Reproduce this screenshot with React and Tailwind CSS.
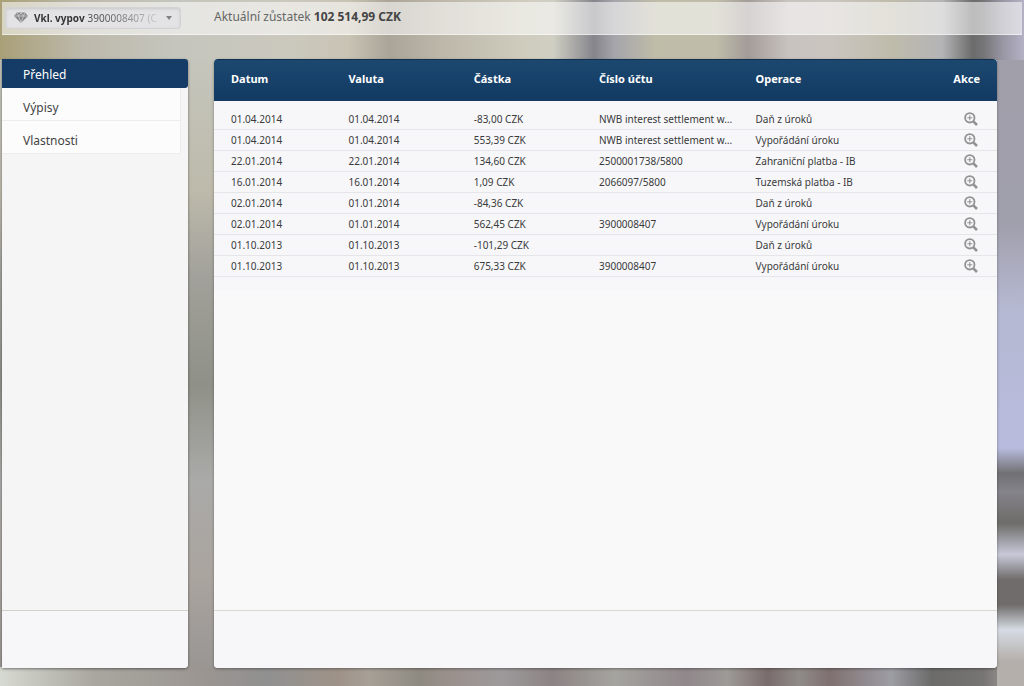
import { useState } from 'react';

const ACCOUNTS = [{ name: 'Vkl. vypov', number: '3900008407 (C' }];

const MENU = ['Přehled', 'Výpisy', 'Vlastnosti'];

const TRANSACTIONS = [
  { date: '01.04.2014', valuta: '01.04.2014', amount: '-83,00 CZK', account: 'NWB interest settlement w…', operation: 'Daň z úroků' },
  { date: '01.04.2014', valuta: '01.04.2014', amount: '553,39 CZK', account: 'NWB interest settlement w…', operation: 'Vypořádání úroku' },
  { date: '22.01.2014', valuta: '22.01.2014', amount: '134,60 CZK', account: '2500001738/5800', operation: 'Zahraniční platba - IB' },
  { date: '16.01.2014', valuta: '16.01.2014', amount: '1,09 CZK', account: '2066097/5800', operation: 'Tuzemská platba - IB' },
  { date: '02.01.2014', valuta: '01.01.2014', amount: '-84,36 CZK', account: '', operation: 'Daň z úroků' },
  { date: '02.01.2014', valuta: '01.01.2014', amount: '562,45 CZK', account: '3900008407', operation: 'Vypořádání úroku' },
  { date: '01.10.2013', valuta: '01.10.2013', amount: '-101,29 CZK', account: '', operation: 'Daň z úroků' },
  { date: '01.10.2013', valuta: '01.10.2013', amount: '675,33 CZK', account: '3900008407', operation: 'Vypořádání úroku' },
];

function GemIcon() {
  return (
    <svg viewBox="0 0 14 11" className="h-[11px] w-[14px] shrink-0" aria-hidden="true">
      <path d="M3 0.5h8L14 4 7 11 0 4z" fill="#858585" />
      <path
        d="M0.5 4h13M3.2 0.8 4.5 4 7 10.5 9.5 4l1.3-3.2M4.5 4 7 0.8 9.5 4"
        fill="none"
        stroke="#d8d8dc"
        strokeWidth="0.7"
      />
    </svg>
  );
}

function ZoomIcon() {
  return (
    <svg viewBox="0 0 14 14" className="size-[14px]" fill="none" stroke="#929292" aria-hidden="true">
      <circle cx="5.8" cy="5.8" r="4.7" strokeWidth="1.8" />
      <path d="M3.3 5.8h5M5.8 3.3v5" strokeWidth="1.1" />
      <path d="m9.3 9.3 3.7 3.7" strokeWidth="2.6" />
    </svg>
  );
}

function AccountPicker() {
  const [selected, setSelected] = useState(0);
  const account = ACCOUNTS[selected];

  return (
    <div className="relative flex h-[22px] w-[176px] items-center rounded-[3px] border border-[#d3d3d6] bg-[#e3e3e6] px-2 text-[10px] leading-4 shadow-[inset_0_1px_3px_rgba(0,0,0,0.12)]">
      <GemIcon />
      <span className="ml-[6px] flex gap-[3px] whitespace-nowrap text-[#555] [mask-image:linear-gradient(to_right,#000_55%,transparent_110%)]">
        <b className="text-[#333]">{account.name}</b>
        <span>{account.number}</span>
      </span>
      <svg viewBox="0 0 6 4" className="ml-auto h-1 w-[6px] shrink-0" aria-hidden="true">
        <path d="M0 0h6L3 4z" fill="#808080" />
      </svg>
      <select
        aria-label="Vkl. vypov"
        value={selected}
        onChange={(e) => setSelected(Number(e.target.value))}
        className="absolute inset-0 w-full cursor-pointer opacity-0"
      >
        {ACCOUNTS.map((item, index) => (
          <option key={item.number} value={index}>
            {item.name} {item.number}
          </option>
        ))}
      </select>
    </div>
  );
}

function Sidebar() {
  const [active, setActive] = useState('Přehled');

  return (
    <aside className="flex w-[186px] shrink-0 flex-col rounded-r-[4px] bg-[#f5f5f5] shadow-[0_1px_3px_rgba(0,0,0,0.45)]">
      <nav className="flex flex-1 flex-col text-[12px] leading-5">
        {MENU.map((item) => (
          <a
            key={item}
            href="#"
            onClick={() => setActive(item)}
            className={
              item === active
                ? 'flex h-[29px] items-center rounded-r-[3px] bg-[#143c66] pt-[2px] pl-[21px] text-white'
                : 'mr-[7px] flex h-[33px] items-center border-r border-b border-[#ededed] bg-[#fcfcfc] pt-2 pl-[21px] text-[#444]'
            }
          >
            {item}
          </a>
        ))}
      </nav>
      <div className="h-[58px] rounded-br-[4px] border-t border-[#d2d2c8] bg-[#f7f7fa]" />
    </aside>
  );
}

function Transactions() {
  return (
    <main className="flex min-w-0 flex-1 flex-col overflow-hidden rounded-[4px] bg-[#f9f9f9] shadow-[0_1px_3px_rgba(0,0,0,0.35)]">
      <div className="flex-1">
        <div className="bg-[#f7f7fa] pb-[14px]">
          <table className="w-full table-fixed text-left text-[10px] leading-4 text-[#3a3a3a]">
            <colgroup>
              <col className="w-[15%]" />
              <col className="w-[16%]" />
              <col className="w-[16%]" />
              <col className="w-[20%]" />
              <col className="w-[23%]" />
              <col className="w-[10%]" />
            </colgroup>
            <thead className="bg-linear-to-b from-[#1c4870] to-[#123a63] text-[11px] text-white">
              <tr className="h-[41px] border-t border-[#12304e]">
                <th className="pb-[2px] pl-[17px]">Datum</th>
                <th className="pb-[2px] pl-[17px]">Valuta</th>
                <th className="pb-[2px] pl-[17px]">Částka</th>
                <th className="pb-[2px] pl-[17px]">Číslo účtu</th>
                <th className="pb-[2px] pl-[17px]">Operace</th>
                <th className="pr-[17px] pb-[2px] text-right">Akce</th>
              </tr>
            </thead>
            <tbody className="before:block before:h-2">
              {TRANSACTIONS.map((row, index) => (
                <tr key={index} className="h-[21px] border-b border-[#e6e6ea] whitespace-nowrap">
                  <td className="pl-[17px]">{row.date}</td>
                  <td className="pl-[17px]">{row.valuta}</td>
                  <td className="pl-[17px]">{row.amount}</td>
                  <td className="pl-[17px]">{row.account}</td>
                  <td className="pl-[17px]">{row.operation}</td>
                  <td className="pr-[19px]">
                    <button type="button" aria-label={row.operation} className="ml-auto block cursor-pointer">
                      <ZoomIcon />
                    </button>
                  </td>
                </tr>
              ))}
            </tbody>
          </table>
        </div>
      </div>
      <div className="h-[58px] border-t border-[#d9d9cf] bg-[#f7f7fa]" />
    </main>
  );
}

// Blurred photo backdrop: top strip, right edge, bottom strip, then the gutter tones
const BACKDROP =
  'bg-no-repeat ' +
  'bg-[linear-gradient(to_right,#a9a078_0%,#bdb9ab_8%,#c5c5bd_17%,#cbc9be_28%,#c9c3b4_34%,#aaa598_38%,#bcb7a9_43%,#cfccbd_51%,#d0cfc3_54%,#86858c_58%,#a5a5ab_60%,#bfbca8_64%,#bfbca9_70%,#a39c99_73%,#c9c3c0_77%,#cbc5c0_81%,#bfbcab_87%,#b4b4b6_92%,#6d6c6c_95%,#757476_96%,#9a98a5_98%,#b3b1c4_100%),linear-gradient(to_bottom,#a19faa_0%,#a09fac_26%,#b6b9d2_40%,#b8bbdd_62%,#717174_66%,#85838b_69%,#6d6c69_74%,#c7c9d8_79%,#706c6b_83%,#6f6c6a_87%,#d5dbe3_91%,#b5afab_96%),linear-gradient(to_right,#d7dad2_0%,#a9a7a0_9%,#9b9591_20%,#909090_26%,#9e9288_33%,#a6a097_36%,#8f8a81_41%,#9a908c_44%,#9d9a9b_49%,#8c8383_54%,#a5a49f_60%,#90878a_67%,#9d9a97_71%,#7a6c6c_75%,#8f8b89_78%,#7f7070_81%,#9d9da4_87%,#6b6b6a_91%,#777574_96%,#b0aaa5_100%),linear-gradient(to_bottom,#c6c6be_0%,#c5c5bc_9%,#bdbaab_28%,#a2a19b_40%,#8f9188_56%,#aaaaa8_70%,#aaa49f_84%,#969391_100%)] ' +
  'bg-[size:100%_60px,27px_calc(100%_-_60px),100%_19px,100%_100%] ' +
  'bg-[position:0_0,100%_60px,0_100%,0_0]';

export default function App() {
  return (
    <div
      className={`flex min-h-screen flex-col pt-[2px] font-["Noto_Sans",sans-serif] ${BACKDROP}`}
    >
      <header className="mx-[2px] flex h-[33px] items-center border-b border-white/50 bg-white/55 pb-[1px] pl-[3px]">
        <AccountPicker />
        <p className="ml-[33px] pb-[2px] text-[12px] leading-5 whitespace-nowrap text-[#666]">
          Aktuální zůstatek <b className="text-[#444]">102 514,99 CZK</b>
        </p>
      </header>
      <div className="flex flex-1 gap-[26px] pt-6 pr-[27px] pb-[18px] pl-[2px]">
        <Sidebar />
        <Transactions />
      </div>
    </div>
  );
}
